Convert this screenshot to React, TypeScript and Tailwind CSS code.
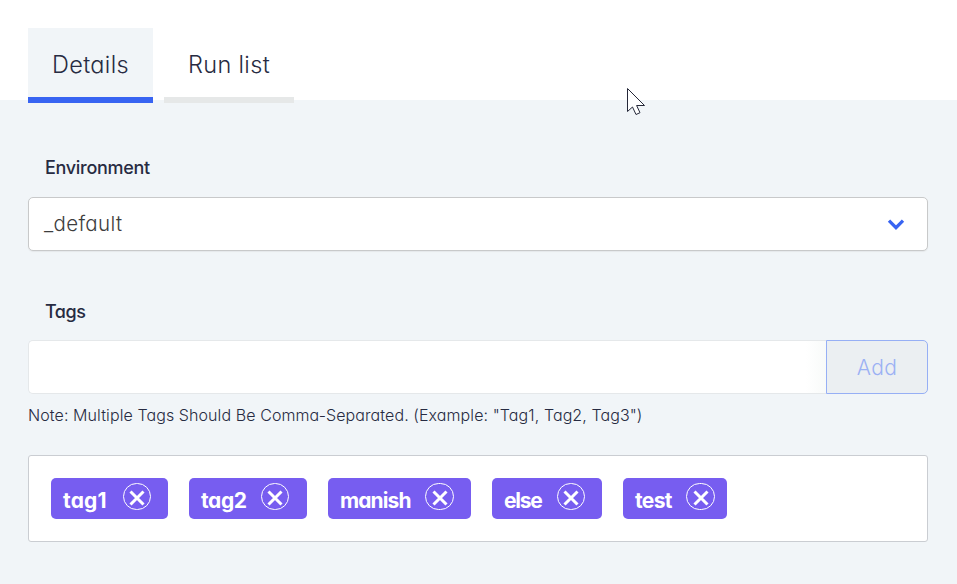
import React from "react";

const tags = [
  { name: "tag1", width: "w-[117px]", label: "w-[60px]", ring: "w-7", spacing: "tracking-[0.2px]" },
  { name: "tag2", width: "w-[118px]", label: "w-[60px]", ring: "w-7", spacing: "tracking-[-0.4px]" },
  { name: "manish", width: "w-[143px]", label: "w-[85px]", ring: "w-[29px]", spacing: "tracking-[-0.9px]" },
  { name: "else", width: "w-[110px]", label: "w-[53px]", ring: "w-7", spacing: "tracking-[-1.2px]" },
  { name: "test", width: "w-[104px]", label: "w-[51px]", ring: "w-[29px]", spacing: "tracking-[-0.65px]" },
];

function Tag({ name, width, label, ring, spacing }: (typeof tags)[number]) {
  return (
    <div className={`flex h-[41px] rounded-[5px] bg-[#775df0] pl-3 pt-[5px] text-white ${width}`}>
      <span className={`mt-[3px] shrink-0 text-[21px] font-bold leading-[29px] ${label} ${spacing}`}>{name}</span>
      <button aria-label={`Remove ${name}`} className={`flex h-[27px] shrink-0 items-center justify-center rounded-full border border-white ${ring}`}>
        <svg width="16" height="16" viewBox="0 0 16 16" className="mt-[3px]" fill="none" stroke="currentColor" strokeWidth="3">
          <path d="M1.5 1.5 14.5 14.5M14.5 1.5 1.5 14.5" />
        </svg>
      </button>
    </div>
  );
}

export default function App() {
  return (
    <main className="relative h-[584px] w-[957px] overflow-hidden bg-[#f1f5f8] font-['Inter','Lato',sans-serif] text-[#272b42] [font-feature-settings:'cv11']">
      <header className="flex h-[100px] gap-[11px] bg-white pl-7 pt-7">
        <button className="h-[75px] w-[125px] border-b-[6px] border-[#3864f2] bg-[#f1f5f8] pt-[5px] text-[23.5px] font-light leading-[64px] tracking-[0.35px]">
          Details
        </button>
        <button className="h-[75px] w-[130px] border-b-[6px] border-[#e6e8e8] pt-[5px] text-[23.5px] font-light leading-[64px] tracking-[0.35px]">
          Run list
        </button>
      </header>

      <section className="px-7 pt-[56px]">
        <h2 className="h-[41px] pl-[17px] text-[18px] font-medium leading-6 tracking-[-0.3px]">Environment</h2>
        <div className="flex h-[54px] w-[900px] items-center justify-between rounded-[5px] border border-[#c8c9ca] bg-white pl-[15px] pr-[22px] text-[#3d3d3d] shadow-[0_1px_1px_#e5e8ea]">
          <span className="text-[20.5px] font-light tracking-[0.35px]">_default</span>
          <svg width="18" height="12" viewBox="0 0 18 12" className="mt-[2px]" fill="none" stroke="#3864f2" strokeWidth="3.3">
            <path d="m2 1.7 7 7 7-7" />
          </svg>
        </div>

        <h2 className="mt-[49px] h-[40px] pl-[17px] text-[18px] font-medium leading-6 tracking-[-0.5px]">Tags</h2>
        <div className="flex h-[54px] w-[900px]">
          <div className="w-[798px] rounded-l-[5px] border border-r-0 border-[#e5e8ea] bg-[linear-gradient(90deg,#fff_97.5%,#f8faf9)]" />
          <button className="w-[102px] rounded-r-[5px] border border-[#96aff5] bg-[#ebeff2] pt-[2px] text-[21px] font-light tracking-[0.4px] text-[#9bb1f4]">Add</button>
        </div>
        <p className="mt-[9px] h-[52px] whitespace-nowrap text-[16px] font-light leading-6 tracking-[0.09px]">
          Note: Multiple Tags Should Be Comma-Separated. (Example: "Tag1, Tag2, Tag3")
        </p>
        <div className="flex h-[87px] w-[900px] gap-[21px] rounded-[3px] border border-[#cacdd2] bg-white pl-[22px] pt-[22px]">
          {tags.map((tag) => <Tag key={tag.name} {...tag} />)}
        </div>
      </section>

      <svg className="absolute left-[626px] top-[87px]" width="20" height="29" viewBox="0 0 20 29" fill="white" stroke="#252839">
        <path d="M1.5 1.5v23l5-4.5 3.5 7.5 4-1.8-3.4-7.2h7.9Z" />
      </svg>
    </main>
  );
}
